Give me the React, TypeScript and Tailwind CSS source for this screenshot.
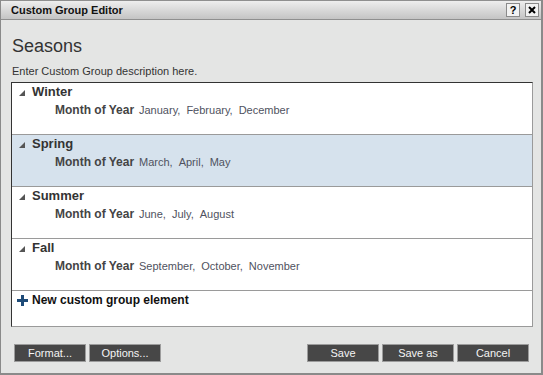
import React from "react";

const rows = [
  { name: "Winter", vals: ["January", "February", "December"], sel: false },
  { name: "Spring", vals: ["March", "April", "May"], sel: true },
  { name: "Summer", vals: ["June", "July", "August"], sel: false },
  { name: "Fall", vals: ["September", "October", "November"], sel: false },
];

function Btn({ label }: { label: string }) {
  return (
    <div className="w-[72px] h-[18px] bg-[#474747] border border-[#9c9c9c] text-[#f4f4f4] text-[11px] leading-none flex items-center justify-center">
      {label}
    </div>
  );
}

export default function App() {
  return (
    <div className="w-[543px] h-[375px] bg-[#e4e5e4] border-l border-r-2 border-b-2 border-[#8a8a8a] font-['Liberation_Sans',Arial,sans-serif] flex flex-col overflow-hidden">
      <div className="h-[20px] shrink-0 bg-gradient-to-b from-[#eeeeee] to-[#c4c4c4] border-t border-b border-[#8f8f8f] flex items-center pl-[10px] pr-[2px]">
        <span className="text-[11px] font-bold text-[#111] flex-1 leading-none">Custom Group Editor</span>
        <div className="flex gap-[5px]">
          <div className="w-[14px] h-[14px] bg-[#f2f2f2] border border-[#8a8a8a] flex items-center justify-center text-[11px] font-bold text-black leading-none">?</div>
          <div className="w-[14px] h-[14px] bg-[#f2f2f2] border border-[#8a8a8a] flex items-center justify-center">
            <svg width="8" height="8" viewBox="0 0 8 8">
              <path d="M1 1 L7 7 M7 1 L1 7" stroke="#000" strokeWidth="2" />
            </svg>
          </div>
        </div>
      </div>
      <div className="flex flex-col pl-[10px] pr-[8px]">
        <div className="mt-[15px] pl-[1px] text-[18px] leading-[22px] text-[#333]">Seasons</div>
        <div className="mt-[7px] pl-[1px] text-[11px] leading-[14px] text-[#333]">Enter Custom Group description here.</div>
        <div className="mt-[4px] w-[522px] h-[245px] bg-white border border-t-[#333] border-l-[#333] border-r-[#9a9a9a] border-b-[#9a9a9a] flex flex-col">
          {rows.map((r) => (
            <div
              key={r.name}
              className={`h-[52px] shrink-0 border-b border-[#9a9a9a] pl-[7px] ${r.sel ? "bg-[#d6e2ed]" : "bg-white"}`}
            >
              <div className="flex items-start h-[17px]">
                <svg width="6" height="6" viewBox="0 0 6 6" className="mt-[7px]">
                  <polygon points="6,0 6,6 0,6" fill="#555" />
                </svg>
                <span className="ml-[7px] text-[13px] font-bold leading-[17px] text-[#333]">{r.name}</span>
              </div>
              <div className="flex items-baseline mt-[2px] h-[17px] pl-[36px]">
                <span className="w-[84px] shrink-0 text-[12px] font-bold text-[#444] leading-[17px]">Month of Year</span>
                <div className="flex gap-[6px] text-[11px] text-[#4f5260] leading-[17px]">
                  {r.vals.map((v, i) => (
                    <span key={v}>
                      {v}
                      {i < r.vals.length - 1 ? "," : ""}
                    </span>
                  ))}
                </div>
              </div>
            </div>
          ))}
          <div className="flex items-center h-[17px] mt-[1px] pl-[5px]">
            <svg width="11" height="11" viewBox="0 0 11 11">
              <rect x="4" y="0" width="3" height="11" fill="#1e4b78" />
              <rect x="0" y="4" width="11" height="3" fill="#1e4b78" />
            </svg>
            <span className="ml-[4px] text-[12px] font-bold text-[#111] leading-[17px]">New custom group element</span>
          </div>
        </div>
        <div className="mt-[17px] flex ml-[3px] mr-[4px]">
          <div className="flex gap-[3px]">
            <Btn label="Format..." />
            <Btn label="Options..." />
          </div>
          <div className="flex-1" />
          <div className="flex gap-[3px]">
            <Btn label="Save" />
            <Btn label="Save as" />
            <Btn label="Cancel" />
          </div>
        </div>
      </div>
    </div>
  );
}
